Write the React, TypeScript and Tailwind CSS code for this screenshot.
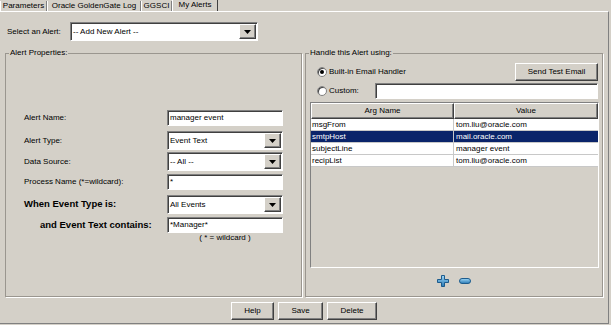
import type { ReactNode } from 'react'

const raised =
  'border border-t-white border-l-white border-r-[#404040] border-b-[#404040] shadow-[inset_-1px_-1px_0_#808080] bg-[#d4d0c8]'
const sunken =
  'border border-t-[#808080] border-l-[#808080] border-r-white border-b-white shadow-[inset_1px_1px_0_#404040] bg-white'

function Btn({ children, className = '' }: { children: ReactNode; className?: string }) {
  return <div className={`flex items-center justify-center ${raised} ${className}`}>{children}</div>
}

function Field({ value, className = '' }: { value: string; className?: string }) {
  return (
    <div className={`flex items-center h-[16px] pl-[2px] ${sunken} ${className}`}>
      <span className="leading-none">{value}</span>
    </div>
  )
}

function Combo({ value, className = '' }: { value: string; className?: string }) {
  return (
    <div className={`flex items-center h-[19px] ${sunken} ${className}`}>
      <span className="flex-1 pl-[2px] leading-none">{value}</span>
      <div className={`w-[17px] h-[15px] mr-[1px] flex items-center justify-center ${raised}`}>
        <svg width="7" height="4" viewBox="0 0 7 4">
          <polygon points="0,0 7,0 3.5,4" fill="#000" />
        </svg>
      </div>
    </div>
  )
}

function Radio({ checked }: { checked?: boolean }) {
  return (
    <div className="w-[10px] h-[10px] rounded-full bg-white border border-[#808080] shadow-[inset_1px_1px_0_#404040] flex items-center justify-center">
      {checked && <div className="w-[4px] h-[4px] rounded-full bg-black" />}
    </div>
  )
}

function Group({ title, children, className = '' }: { title: string; children: ReactNode; className?: string }) {
  return (
    <fieldset className={`border border-[#9a968f] shadow-[1px_1px_0_#fff] flex flex-col ${className}`}>
      <legend className="ml-[3px] px-[1px] leading-[10px]">{title}</legend>
      {children}
    </fieldset>
  )
}

const tabs = [
  { label: 'Parameters', w: 'w-[47px]' },
  { label: 'Oracle GoldenGate Log', w: 'w-[94px]' },
  { label: 'GGSCI', w: 'w-[31px]' },
]

const rows = [
  ['msgFrom', 'tom.liu@oracle.com'],
  ['smtpHost', 'mail.oracle.com'],
  ['subjectLine', 'manager event'],
  ['recipList', 'tom.liu@oracle.com'],
]

export default function App() {
  return (
    <div className="w-[611px] h-[325px] bg-[#d4d0c8] text-[8px] text-black font-['Liberation_Sans',Arial,sans-serif] flex flex-col overflow-hidden">
      {/* tab strip */}
      <div className="h-[11px] flex items-end">
        {tabs.map((t) => (
          <div
            key={t.label}
            className={`${t.w} h-[10px] flex items-center justify-center border-l border-l-white border-r border-r-[#808080] leading-none`}
          >
            {t.label}
          </div>
        ))}
        <div className="w-[46px] h-[11px] flex items-center justify-center border-l border-l-white border-r border-r-[#404040] leading-none pb-[1px]">
          My Alerts
        </div>
      </div>

      {/* tab page */}
      <div className="h-[313px] mr-[2px] flex flex-col border-t border-t-white border-r border-r-[#808080] border-b border-b-[#808080] px-[5px]">
        <div className="mt-[10px] h-[19px] flex items-center">
          <span className="w-[65px] pl-[2px]">Select an Alert:</span>
          <Combo value="-- Add New Alert --" className="w-[188px]" />
        </div>

        <div className="mt-[7px] h-[249px] flex gap-[3px]">
          <Group title="Alert Properties:" className="w-[297px]">
            <div className="pt-[52px] pl-[18px] grid grid-cols-[143px_116px] items-center">
              <span>Alert Name:</span>
              <Field value="manager event" />

              <span className="mt-[5px]">Alert Type:</span>
              <Combo value="Event Text" className="mt-[5px]" />

              <span className="mt-[2px]">Data Source:</span>
              <Combo value="-- All --" className="mt-[2px]" />

              <span className="mt-[3px]">Process Name (*=wildcard):</span>
              <Field value="*" className="mt-[3px]" />

              <span className="mt-[5px] text-[9.5px] font-bold">When Event Type is:</span>
              <Combo value="All Events" className="mt-[5px]" />

              <span className="mt-[3px] pl-[16px] text-[9.5px] font-bold">and Event Text contains:</span>
              <Field value="*Manager*" className="mt-[3px]" />

              <span />
              <span className="text-center leading-[10px]">( * = wildcard )</span>
            </div>
          </Group>

          <Group title="Handle this Alert using:" className="w-[298px]">
            <div className="mt-[5px] h-[18px] flex items-center pl-[11px] pr-[4px]">
              <Radio checked />
              <span className="ml-[2px] flex-1">Built-in Email Handler</span>
              <Btn className="w-[83px] h-[18px]">Send Test Email</Btn>
            </div>
            <div className="mt-[2px] h-[16px] flex items-center pl-[11px] pr-[4px]">
              <Radio />
              <span className="ml-[2px] flex-1">Custom:</span>
              <Field value="" className="w-[223px]" />
            </div>

            <div className="mt-[3px] ml-[4px] mr-[3px] h-[166px] border border-t-[#808080] border-l-[#808080] border-r-white border-b-white bg-[#d4d0c8]">
              <div className="flex h-[16px]">
                <Btn className="w-[143px] h-[16px]">Arg Name</Btn>
                <Btn className="flex-1 h-[16px]">Value</Btn>
              </div>
              {rows.map(([k, v], i) => (
                <div
                  key={k}
                  className={`flex h-[12px] border-b border-b-[#c8c8c8] ${i === 1 ? 'bg-[#0a246a] text-white' : 'bg-white'}`}
                >
                  <div className="w-[143px] pl-[1px] flex items-center border-r border-r-[#c8c8c8]">{k}</div>
                  <div className="flex-1 pl-[2px] flex items-center">{v}</div>
                </div>
              ))}
            </div>

            <div className="mt-[7px] flex items-center justify-center gap-[10px]">
              <svg width="12" height="12" viewBox="0 0 12 12">
                <defs>
                  <linearGradient id="pg" x1="0" y1="0" x2="0" y2="1">
                    <stop offset="0" stopColor="#9fd8f8" />
                    <stop offset="1" stopColor="#2878b4" />
                  </linearGradient>
                </defs>
                <path
                  d="M4.5 0.5h3v4h4v3h-4v4h-3v-4h-4v-3h4z"
                  fill="url(#pg)"
                  stroke="#1d5b8c"
                  strokeWidth="1"
                  strokeLinejoin="round"
                />
              </svg>
              <svg width="12" height="6" viewBox="0 0 12 6">
                <defs>
                  <linearGradient id="mg" x1="0" y1="0" x2="0" y2="1">
                    <stop offset="0" stopColor="#9fd8f8" />
                    <stop offset="1" stopColor="#2878b4" />
                  </linearGradient>
                </defs>
                <rect x="0.5" y="0.5" width="11" height="5" rx="2.5" fill="url(#mg)" stroke="#1d5b8c" />
              </svg>
            </div>
          </Group>
        </div>

        <div className="mt-[5px] flex justify-center gap-[4px]">
          <Btn className="w-[43px] h-[18px]">Help</Btn>
          <Btn className="w-[45px] h-[18px]">Save</Btn>
          <Btn className="w-[50px] h-[18px]">Delete</Btn>
        </div>
      </div>
    </div>
  )
}
